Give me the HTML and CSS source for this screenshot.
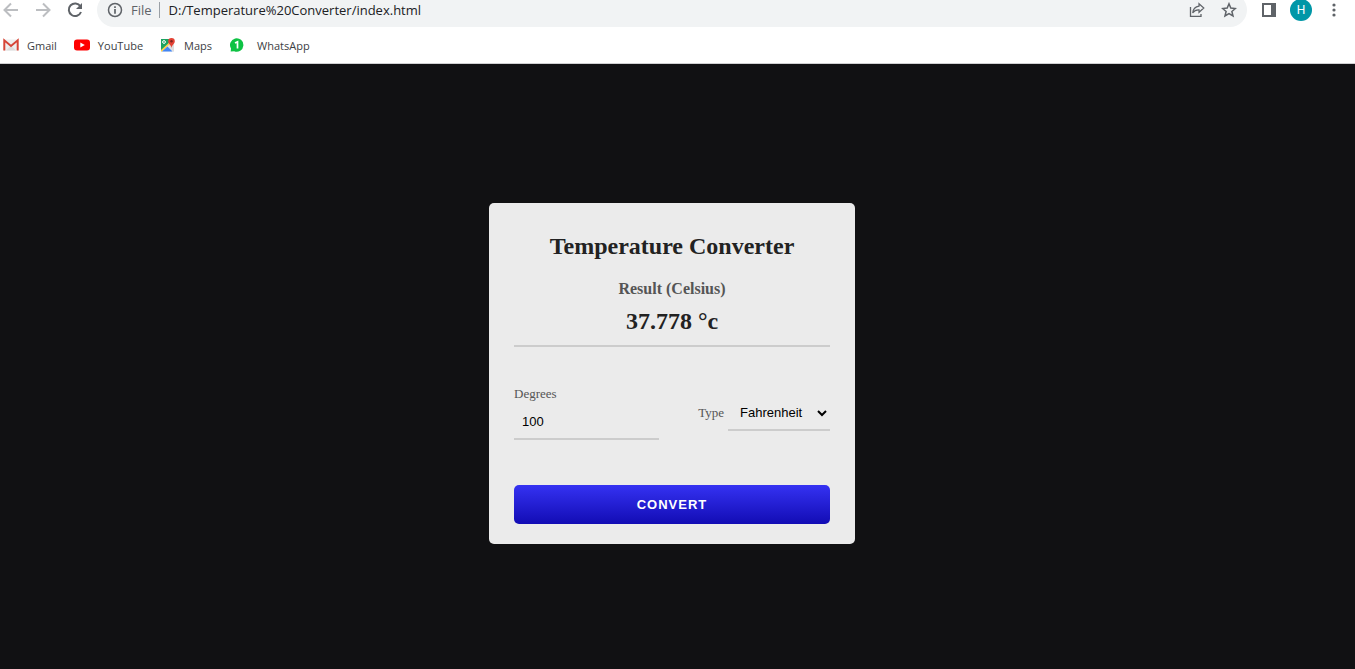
FILE: index.html
```html
<!DOCTYPE html>
<html lang="en">
<head>
<meta charset="utf-8">
<title>Temperature Converter</title>
<link rel="stylesheet" href="styles.css">
</head>
<body>
<header class="browser">
  <div class="toolbar">
    <nav class="nav" aria-label="History">
      <button class="icon-btn faded" aria-label="Back"><svg width="16" height="16" viewBox="0 0 16 16"><path d="M15 8H2M8 1.500L1.500 8L8 14.500" fill="none" stroke="currentColor" stroke-width="2"/></svg></button>
      <button class="icon-btn faded" aria-label="Forward"><svg width="16" height="16" viewBox="0 0 16 16"><path d="M1 8H14M8 1.500L14.500 8L8 14.500" fill="none" stroke="currentColor" stroke-width="2"/></svg></button>
      <button class="icon-btn" aria-label="Reload"><svg width="16" height="16" viewBox="0 0 16 16"><path d="M13.400 4.300A6.300 6.300 0 1 0 14 10" fill="none" stroke="currentColor" stroke-width="2"/><path d="M15 1V7H9z" fill="currentColor"/></svg></button>
    </nav>
    <div class="omnibox">
      <svg width="16" height="16" viewBox="0 0 16 16"><circle cx="8" cy="8" r="6.500" fill="none" stroke="currentColor" stroke-width="1.500"/><path d="M8 7V11.700M8 4.200V5.900" stroke="currentColor" stroke-width="1.700"/></svg>
      <span class="scheme">File</span>
      <span class="divider"></span>
      <input class="url" type="text" value="D:/Temperature%20Converter/index.html" aria-label="Address">
      <button class="icon-btn share" aria-label="Share"><svg width="16" height="16" viewBox="0 0 16 16"><path d="M1.500 5V14.400H12V12" fill="none" stroke="currentColor" stroke-width="1.300"/><path d="M10 1.700L14.800 6L10 10.300V7.900Q6 7.600 3.700 11Q4.300 5 10 4.200z" fill="none" stroke="currentColor" stroke-width="1.200"/></svg></button>
      <button class="icon-btn" aria-label="Bookmark"><svg width="16" height="16" viewBox="0 0 16 16"><path d="M8 1.800L9.800 6.100L14.400 6.500L10.900 9.500L12 14L8 11.600L4 14L5.100 9.500L1.600 6.500L6.200 6.100z" fill="none" stroke="currentColor" stroke-width="1.500"/></svg></button>
    </div>
    <button class="icon-btn" aria-label="Side panel"><svg width="14" height="14" viewBox="0 0 14 14"><path d="M0 0H14V14H0zM2 2V12H9V2z" fill="currentColor" fill-rule="evenodd"/></svg></button>
    <button class="avatar" aria-label="Profile">H</button>
    <button class="icon-btn" aria-label="Menu"><svg width="16" height="16" viewBox="0 0 16 16" fill="currentColor"><circle cx="8" cy="3" r="1.600"/><circle cx="8" cy="8" r="1.600"/><circle cx="8" cy="13" r="1.600"/></svg></button>
  </div>
  <nav class="bookmarks" aria-label="Bookmarks">
    <a class="bookmark" href="#"><svg width="16" height="16" viewBox="0 0 16 16"><path d="M1 2.500H15V13.500H1z" fill="#eee"/><path d="M3 13.500L8 8.500L13 13.500z" fill="#ddd"/><path d="M1.300 13.500V3.300L8 9L14.700 3.300V13.500" fill="none" stroke="#d64537" stroke-width="2"/></svg>Gmail</a>
    <a class="bookmark" href="#"><svg width="16" height="16" viewBox="0 0 16 16"><rect y="2.500" width="16" height="11" rx="3" fill="#f00"/><path d="M6.300 5.500L10.800 8L6.300 10.500z" fill="#fff"/></svg>YouTube</a>
    <a class="bookmark" href="#"><svg width="16" height="16" viewBox="0 0 16 16"><path d="M1 2H14V14.500H1z" fill="#e5e5e5"/><path d="M1 2H11L8 8L1 14z" fill="#1ca261"/><path d="M1 13L12 3L14 5L8 9L2 14.500H1z" fill="#ffd04b"/><path d="M8 9L13.500 14.500H14V8L11 6z" fill="#ddd"/><path d="M2 14.500L7.500 9.500L12.500 14.500z" fill="#4285f4"/><circle cx="4" cy="5" r="1.400" fill="none" stroke="#fff"/><path d="M11.500 11C11.200 8 8.200 7 8.200 4.200A3.300 3.300 0 0 1 14.800 4.200C14.800 7 11.800 8 11.500 11z" fill="#e34133"/><circle cx="11.500" cy="4.200" r="1.200" fill="#7d241e"/></svg>Maps</a>
    <a class="bookmark whatsapp" href="#"><svg width="16" height="16" viewBox="0 0 16 16"><path d="M1.700 14.500L2 11.500A6.700 6.700 0 1 1 5.200 14.200z" fill="#0ec244"/><path d="M6 6L8.500 4.800V11.500" fill="none" stroke="#fff" stroke-width="1.700"/></svg>WhatsApp</a>
  </nav>
</header>
<main class="page">
  <form class="card">
    <h1 class="title">Temperature Converter</h1>
    <div class="result">
      <div class="result-label">Result (Celsius)</div>
      <output class="result-value">37.778 °c</output>
    </div>
    <div class="fields">
      <div class="degrees">
        <label class="label" for="degrees">Degrees</label>
        <input class="control" id="degrees" type="text" inputmode="decimal" value="100">
      </div>
      <div class="type">
        <label class="label" for="type">Type</label>
        <select class="control select" id="type"><option>Fahrenheit</option><option>Celsius</option></select>
      </div>
    </div>
    <button class="convert" type="button">CONVERT</button>
  </form>
</main>
</body>
</html>
```
FILE: styles.css
```css
* { box-sizing: border-box; }

body {
  margin: 0;
  min-height: 100vh;
  display: flex;
  flex-direction: column;
  overflow: hidden;
  background: #111113;
  font-family: "Liberation Serif", "Times New Roman", serif;
}

button { border: 0; padding: 0; background: none; }
svg { display: block; flex: none; }

.browser {
  background: #fff;
  border-bottom: 1px solid #d0d0d2;
  color: #5f6368;
  font-family: "Open Sans", "Segoe UI", sans-serif;
}

.toolbar {
  display: flex;
  align-items: center;
  height: 34px;
  margin-top: -7px;
  padding: 0 13px 0 3px;
}

.nav { display: flex; gap: 16px; }
.icon-btn { color: #5f6368; }
.faded { color: #bcbec1; }

.omnibox {
  flex: 1;
  display: flex;
  align-items: center;
  height: 34px;
  margin: 0 15px 0 14px;
  padding: 0 10px;
  border-radius: 17px;
  background: #f1f3f4;
  font-size: 13px;
}

.scheme { margin-left: 8px; }
.divider { width: 1px; height: 16px; margin: 0 9px 0 7px; background: #9aa0a6; }

.url {
  flex: 1;
  min-width: 0;
  padding: 0;
  border: 0;
  background: none;
  color: #202124;
  font: inherit;
}

.share { margin-right: 16px; }

.avatar {
  width: 22px;
  height: 22px;
  margin: 0 14px;
  border-radius: 50%;
  background: #0097a7;
  color: #fff;
  font: 12px Roboto, sans-serif;
}

.bookmarks {
  display: flex;
  align-items: center;
  gap: 17px;
  height: 36px;
  padding-left: 3px;
}

.bookmark {
  display: flex;
  align-items: center;
  gap: 8px;
  color: #3c4043;
  font-size: 11px;
  text-decoration: none;
}

.whatsapp { gap: 12px; }

.page {
  flex: 1;
  display: flex;
  align-items: center;
  justify-content: center;
  padding: 14px 11px 0 0;
}

.card {
  width: 366px;
  max-width: 100%;
  padding: 25px 25px 20px;
  border-radius: 5px;
  background: #ebebeb;
}

.title {
  margin: 0 0 13px;
  color: #222;
  font-size: 24px;
  line-height: 36px;
  text-align: center;
}

.result {
  padding-bottom: 10px;
  border-bottom: 2px solid #ccc;
  font-weight: bold;
  text-align: center;
}

.result-label { color: #555; font-size: 16px; line-height: 24px; }
.result-value { display: block; margin-top: 6px; color: #222; font-size: 24px; line-height: 28px; }

.fields {
  display: flex;
  align-items: center;
  justify-content: space-between;
  margin: 39px 0 45px;
}

.degrees { display: flex; flex-direction: column; gap: 2px; width: 145px; }
.type { display: flex; align-items: center; gap: 4px; }
.label { color: #555; font-size: 13px; line-height: 16px; }

.control {
  width: 100%;
  height: 36px;
  padding: 0 8px;
  border: 0;
  border-bottom: 2px solid #ccc;
  border-radius: 0;
  background: transparent;
  color: #000;
  font: 13px "Liberation Sans", Arial, sans-serif;
}

.select { width: 102px; padding: 0 0 0 8px; }

.convert {
  display: block;
  width: 100%;
  height: 39px;
  border-radius: 5px;
  background: linear-gradient(#3532f2, #120cb4);
  color: #fff;
  font: bold 13px "Liberation Sans", Arial, sans-serif;
  letter-spacing: 1px;
}
```
